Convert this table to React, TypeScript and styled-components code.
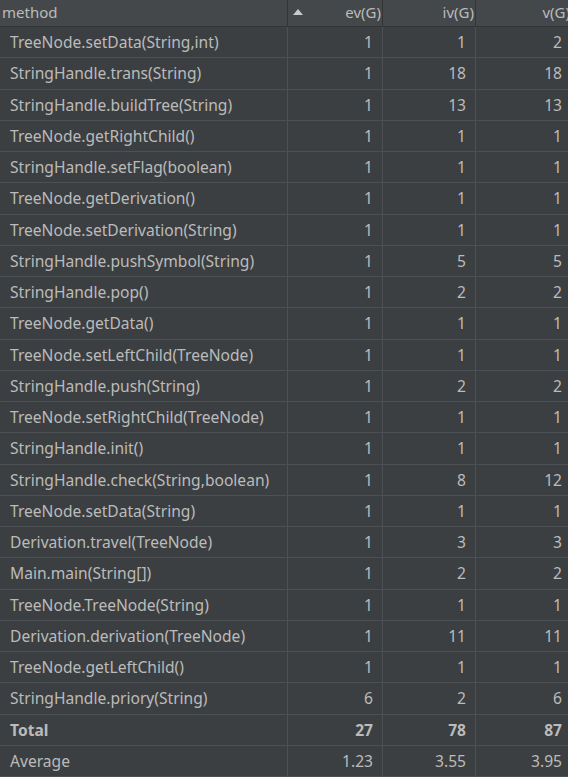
import React from "react";
import styled, { createGlobalStyle } from "styled-components";

const Global = createGlobalStyle`
  html, body { margin: 0; padding: 0; background: #3c3f41; overflow: hidden; }
  body { width: 568px; height: 777px; }
`;

const Frame = styled.div`
  width: 568px;
  height: 777px;
  overflow: hidden;
  background: #3c3f41;
  font-family: "Noto Sans", "Open Sans", sans-serif;
  font-size: 15px;
  color: #bbbbbb;
`;

const Table = styled.div`
  width: 572px;
  display: grid;
  grid-template-columns: 288px 95px 93px 96px;
  grid-template-rows: 27px;
  grid-auto-rows: 31.25px;
`;

const HeadCell = styled.div<{ $first?: boolean }>`
  background: #45484a;
  border-right: 1px solid #323435;
  border-bottom: 1px solid #323435;
  display: flex;
  align-items: center;
  justify-content: ${(p) => (p.$first ? "flex-start" : "flex-end")};
  padding: 0 ${(p) => (p.$first ? "0" : "1px")} 2px ${(p) => (p.$first ? "2px" : "0")};
  box-sizing: border-box;
  position: relative;
  white-space: nowrap;
`;

const SortArrow = styled.span`
  position: absolute;
  left: 5px;
  top: 9px;
  width: 0;
  height: 0;
  border-left: 5px solid transparent;
  border-right: 5px solid transparent;
  border-bottom: 6px solid #c9c9c9;
`;

const Cell = styled.div<{ $first?: boolean; $bold?: boolean }>`
  border-right: 1px solid #4d5153;
  border-bottom: 1px solid #4d5153;
  display: flex;
  align-items: center;
  justify-content: ${(p) => (p.$first ? "flex-start" : "flex-end")};
  padding: 0 ${(p) => (p.$first ? "0" : "9px")} 0 ${(p) => (p.$first ? "10px" : "0")};
  box-sizing: border-box;
  font-size: 15.6px;
  font-weight: ${(p) => (p.$bold ? 700 : 400)};
  white-space: nowrap;
`;

const rows: [string, string, string, string][] = [
  ["TreeNode.setData(String,int)", "1", "1", "2"],
  ["StringHandle.trans(String)", "1", "18", "18"],
  ["StringHandle.buildTree(String)", "1", "13", "13"],
  ["TreeNode.getRightChild()", "1", "1", "1"],
  ["StringHandle.setFlag(boolean)", "1", "1", "1"],
  ["TreeNode.getDerivation()", "1", "1", "1"],
  ["TreeNode.setDerivation(String)", "1", "1", "1"],
  ["StringHandle.pushSymbol(String)", "1", "5", "5"],
  ["StringHandle.pop()", "1", "2", "2"],
  ["TreeNode.getData()", "1", "1", "1"],
  ["TreeNode.setLeftChild(TreeNode)", "1", "1", "1"],
  ["StringHandle.push(String)", "1", "2", "2"],
  ["TreeNode.setRightChild(TreeNode)", "1", "1", "1"],
  ["StringHandle.init()", "1", "1", "1"],
  ["StringHandle.check(String,boolean)", "1", "8", "12"],
  ["TreeNode.setData(String)", "1", "1", "1"],
  ["Derivation.travel(TreeNode)", "1", "3", "3"],
  ["Main.main(String[])", "1", "2", "2"],
  ["TreeNode.TreeNode(String)", "1", "1", "1"],
  ["Derivation.derivation(TreeNode)", "1", "11", "11"],
  ["TreeNode.getLeftChild()", "1", "1", "1"],
  ["StringHandle.priory(String)", "6", "2", "6"],
];

export default function App() {
  return (
    <Frame>
      <Global />
      <Table>
        <HeadCell $first>method</HeadCell>
        <HeadCell>
          <SortArrow />
          ev(G)
        </HeadCell>
        <HeadCell>iv(G)</HeadCell>
        <HeadCell>v(G)</HeadCell>
        {rows.map((r, i) => (
          <React.Fragment key={i}>
            <Cell $first>{r[0]}</Cell>
            <Cell>{r[1]}</Cell>
            <Cell>{r[2]}</Cell>
            <Cell>{r[3]}</Cell>
          </React.Fragment>
        ))}
        <Cell $first $bold>Total</Cell>
        <Cell $bold>27</Cell>
        <Cell $bold>78</Cell>
        <Cell $bold>87</Cell>
        <Cell $first>Average</Cell>
        <Cell>1.23</Cell>
        <Cell>3.55</Cell>
        <Cell>3.95</Cell>
      </Table>
    </Frame>
  );
}
